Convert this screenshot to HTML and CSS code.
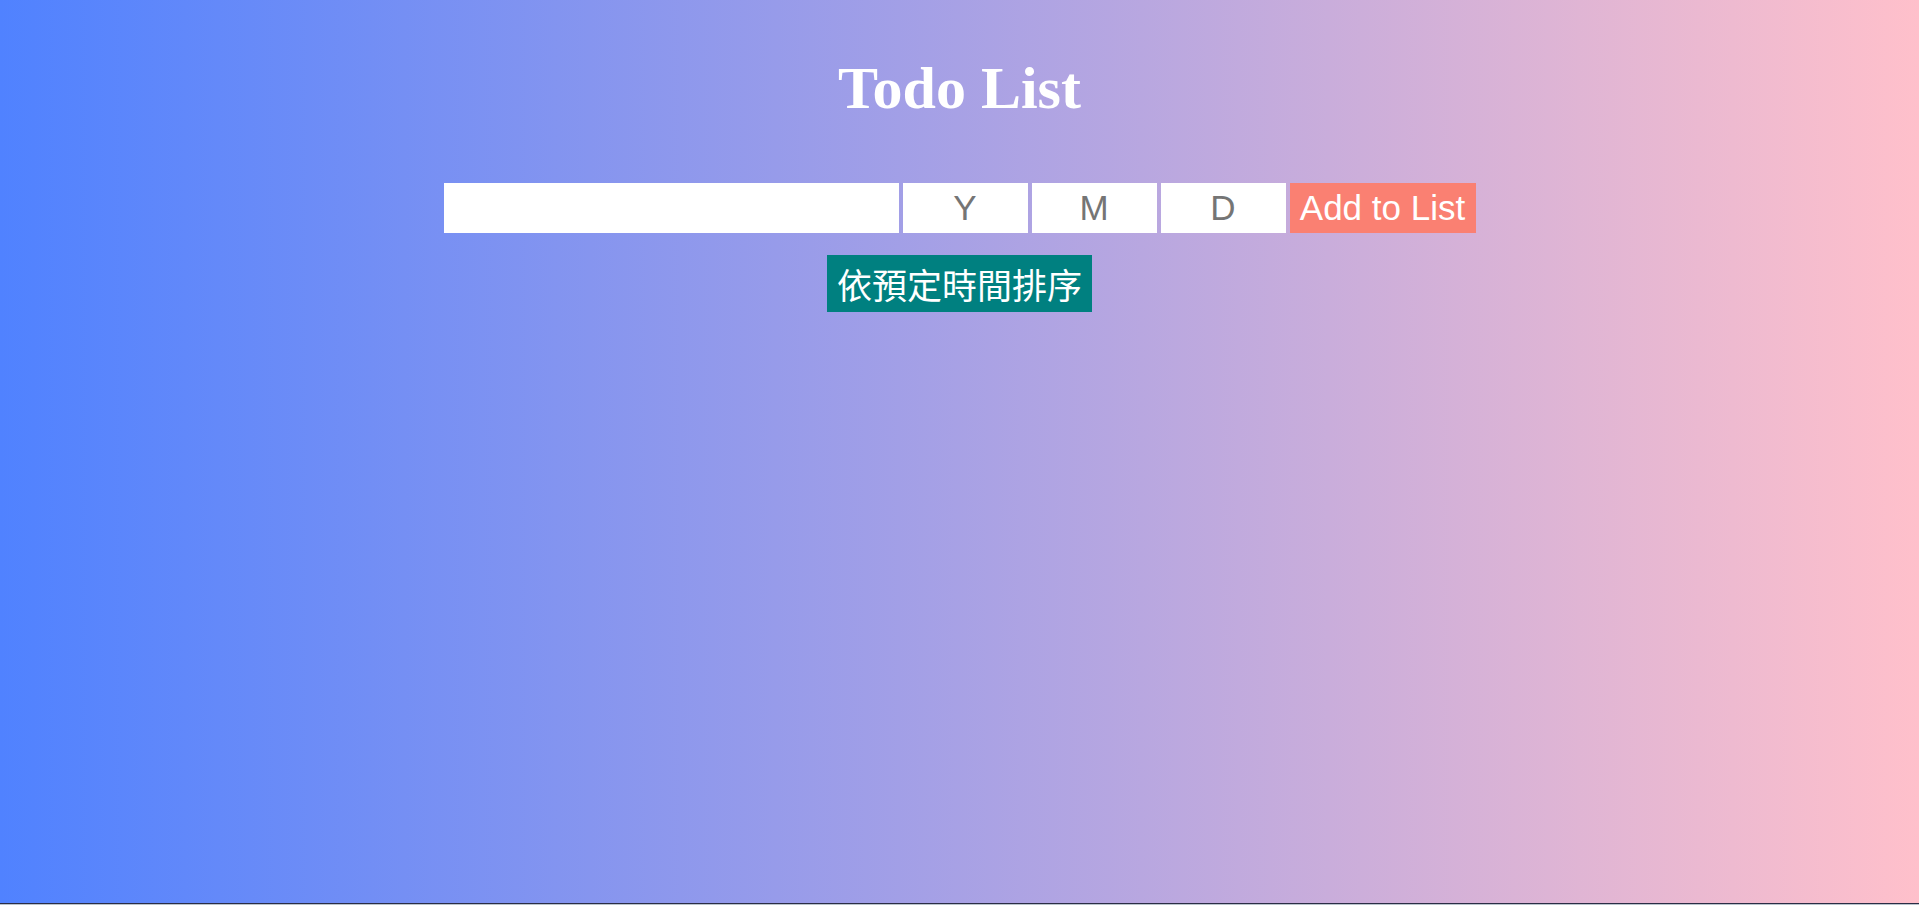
FILE: index.html
```html
<!DOCTYPE html>
<html lang="zh-Hant">
<head>
<meta charset="utf-8">
<title>Todo List</title>
<link rel="stylesheet" href="styles.css">
</head>
<body>
<div class="page">
  <main class="app">
    <h1 class="title">Todo List</h1>
    <div class="form-row">
      <input class="field field-text" type="text">
      <input class="field field-date" type="text" placeholder="Y">
      <input class="field field-date" type="text" placeholder="M">
      <input class="field field-date" type="text" placeholder="D">
      <button class="btn btn-add" type="button">Add to List</button>
    </div>
    <button class="btn btn-sort" type="button">依預定時間排序</button>
  </main>
  <div class="taskbar-edge"></div>
</div>
</body>
</html>
```

FILE: styles.css
```css
html, body {
  margin: 0;
  padding: 0;
  height: 100%;
}

.page {
  height: 100vh;
  display: flex;
  flex-direction: column;
  background: linear-gradient(to right, rgb(80, 130, 255), rgb(255, 192, 203));
}

.app {
  flex: 1;
  display: flex;
  flex-direction: column;
  align-items: center;
}

.title {
  margin: 54px 0 60px;
  font-family: "Liberation Serif", "Times New Roman", serif;
  font-weight: bold;
  font-size: 60px;
  line-height: 69px;
  color: #ffffff;
}

.form-row {
  display: flex;
  gap: 4px;
  height: 50px;
}

.field {
  box-sizing: border-box;
  height: 50px;
  border: none;
  outline: none;
  margin: 0;
  padding: 0 8px;
  background: #ffffff;
  font-family: "Liberation Sans", Arial, sans-serif;
  font-size: 35px;
  color: #555;
}

.field::placeholder {
  color: #757575;
}

.field-text {
  width: 455px;
}

.field-date {
  width: 125px;
  text-align: center;
}

.btn {
  border: none;
  margin: 0;
  color: #ffffff;
  cursor: pointer;
  padding: 0 10px;
}

.btn-add {
  box-sizing: border-box;
  width: 186px;
  height: 50px;
  background: #fa8072;
  font-family: "Liberation Sans", Arial, sans-serif;
  font-size: 35px;
  line-height: 50px;
  white-space: nowrap;
}

.btn-sort {
  margin-top: 22px;
  height: 57px;
  background: #008080;
  font-family: "Noto Sans CJK TC", "Noto Sans CJK SC", sans-serif;
  font-size: 35px;
  line-height: 57px;
  padding: 0 10px;
}

.taskbar-edge {
  height: 2px;
  border-top: 1px solid #2b2d45;
  box-sizing: border-box;
  background: #b9c3cc;
}
```
